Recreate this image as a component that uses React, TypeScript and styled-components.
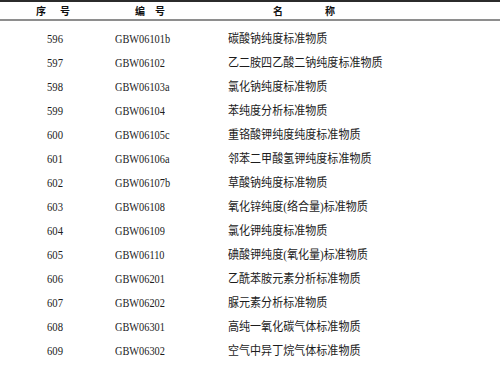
import styled, { createGlobalStyle } from "styled-components";

const GlobalStyle = createGlobalStyle`
  html, body {
    margin: 0;
    padding: 0;
    background: #fff;
  }
  body {
    font-family: "Liberation Serif", "Noto Sans CJK SC", serif;
    color: #1c1c1c;
  }
`;

const Table = styled.div`
  width: 500px;
  border-top: 2px solid #2b2b2b;
`;

const HeadRow = styled.div`
  display: grid;
  grid-template-columns: 110px 118px 1fr;
  height: 17px;
  border-bottom: 2px solid #8e8e8e;
`;

const HeadCell = styled.div<{ $pad: number; $gap: number }>`
  display: flex;
  align-items: center;
  gap: ${(p) => p.$gap}px;
  padding-left: ${(p) => p.$pad}px;
  font-family: "Noto Sans CJK SC", sans-serif;
  font-weight: 700;
  font-size: 10px;
  line-height: 1;
  color: #111;
`;

const Body = styled.div`
  padding-top: 6px;
`;

const Row = styled.div`
  display: grid;
  grid-template-columns: 110px 118px 1fr;
  height: 24px;
  line-height: 24px;
  font-size: 12px;
  white-space: nowrap;
`;

const NumCell = styled.div`
  text-align: center;
`;

const CodeCell = styled.div`
  padding-left: 5px;
`;

const NameCell = styled.div``;

const Squeeze = styled.span<{ $scale: number; $origin?: string }>`
  display: inline-block;
  transform: scaleX(${(p) => p.$scale});
  transform-origin: ${(p) => p.$origin ?? "left"} center;
`;

const rows: [string, string, string][] = [
  ["596", "GBW06101b", "碳酸钠纯度标准物质"],
  ["597", "GBW06102", "乙二胺四乙酸二钠纯度标准物质"],
  ["598", "GBW06103a", "氯化钠纯度标准物质"],
  ["599", "GBW06104", "苯纯度分析标准物质"],
  ["600", "GBW06105c", "重铬酸钾纯度纯度标准物质"],
  ["601", "GBW06106a", "邻苯二甲酸氢钾纯度标准物质"],
  ["602", "GBW06107b", "草酸钠纯度标准物质"],
  ["603", "GBW06108", "氧化锌纯度(络合量)标准物质"],
  ["604", "GBW06109", "氯化钾纯度标准物质"],
  ["605", "GBW06110", "碘酸钾纯度(氧化量)标准物质"],
  ["606", "GBW06201", "乙酰苯胺元素分析标准物质"],
  ["607", "GBW06202", "脲元素分析标准物质"],
  ["608", "GBW06301", "高纯一氧化碳气体标准物质"],
  ["609", "GBW06302", "空气中异丁烷气体标准物质"],
];

const App = () => {
  return (
    <>
      <GlobalStyle />
      <Table>
        <HeadRow>
          <HeadCell $pad={36} $gap={14}>
            <span>序</span>
            <span>号</span>
          </HeadCell>
          <HeadCell $pad={25} $gap={10}>
            <span>编</span>
            <span>号</span>
          </HeadCell>
          <HeadCell $pad={45} $gap={42}>
            <span>名</span>
            <span>称</span>
          </HeadCell>
        </HeadRow>
        <Body>
          {rows.map(([no, code, name]) => (
            <Row key={no}>
              <NumCell>
                <Squeeze $scale={0.89} $origin="center">
                  {no}
                </Squeeze>
              </NumCell>
              <CodeCell>
                <Squeeze $scale={0.86}>{code}</Squeeze>
              </CodeCell>
              <NameCell>
                <Squeeze $scale={0.92}>{name}</Squeeze>
              </NameCell>
            </Row>
          ))}
        </Body>
      </Table>
    </>
  );
};

export default App;
